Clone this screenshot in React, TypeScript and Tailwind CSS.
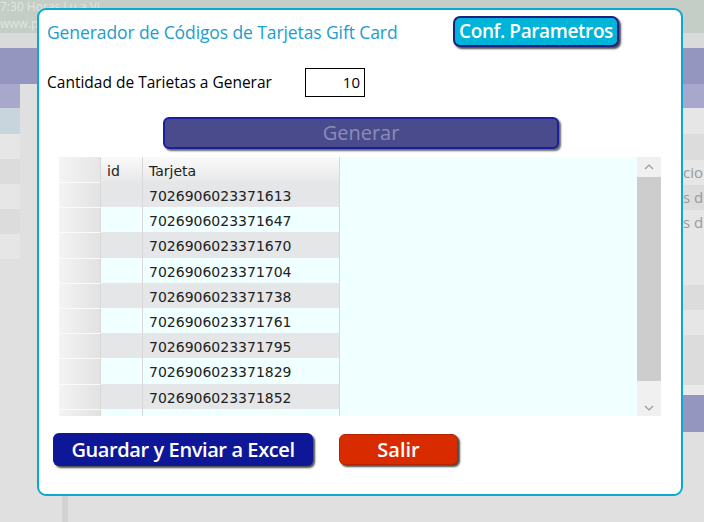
const cards = [
  "7026906023371613",
  "7026906023371647",
  "7026906023371670",
  "7026906023371704",
  "7026906023371738",
  "7026906023371761",
  "7026906023371795",
  "7026906023371829",
  "7026906023371852",
];

const sideRows = [
  "bg-[#e6e6e6]",
  "bg-[#dcdcdc]",
  "bg-[#e6e6e6]",
  "bg-[#dcdcdc]",
  "bg-[#e6e6e6]",
];

const App = () => {
  return (
    <div className="relative w-[704px] h-[522px] overflow-hidden bg-[#e0e0e0] font-['Open_Sans',sans-serif]">
      {/* app behind the dialog */}
      <div className="h-[33px] bg-[#c5cec6] text-[12px] leading-[11px] text-[#dfe6e0]">
        <div className="whitespace-nowrap pt-[1px]">7:30 Horas Lu a Vi</div>
        <div className="w-[36px] whitespace-nowrap pt-[6px]">www.pr</div>
      </div>
      <div className="h-[15px] bg-[#dadada]" />
      <div className="h-[36px] bg-[#9596c0]" />
      <div className="flex justify-between">
        <div className="w-[20px]">
          <div className="h-[24px] bg-[#a8a8cc]" />
          <div className="h-[26px] bg-[#c9d5dc]" />
          {sideRows.map((c, i) => (
            <div key={i} className={`h-[25px] ${c}`} />
          ))}
        </div>
        <div className="w-[21px] text-[15px] text-[#9a9a9a]">
          <div className="h-[24px] bg-[#a8a8cc]" />
          <div className="h-[26px] bg-[#e6e6e6]" />
          <div className="h-[26px] bg-[#dcdcdc]" />
          <div className="h-[25px] bg-[#e6e6e6] leading-[25px]">cio</div>
          <div className="h-[25px] bg-[#dcdcdc] leading-[25px]">s d</div>
          <div className="h-[25px] bg-[#e6e6e6] leading-[25px]">s d</div>
          <div className="h-[50px] bg-[#e6e6e6]" />
          <div className="h-[25px] bg-[#dcdcdc]" />
          <div className="h-[25px] bg-[#e6e6e6]" />
          <div className="h-[50px] bg-[#dcdcdc]" />
          <div className="h-[10px] bg-[#eaeaea]" />
          <div className="h-[37px] bg-[#9596c0]" />
        </div>
      </div>
      <div className="absolute left-[62px] top-[496px] w-[6px] h-[26px] bg-[#d2d2d2]" />

      {/* dialog */}
      <div className="absolute left-[37px] top-[8px] w-[646px] h-[488px] rounded-[9px] border-2 border-[#0aa9d3] bg-white">
        <div className="flex items-start pl-[8px] pt-[6px]">
          <h1 className="mt-[5px] w-[406px] whitespace-nowrap text-[17.5px] leading-[22px] text-[#1c9dcc] tracking-[-0.1px]">
            Generador de Códigos de Tarjetas Gift Card
          </h1>
          <button className="h-[31px] w-[166px] rounded-[7px] border-2 border-[#1d1f82] bg-[#00b3d9] text-[19px] font-semibold leading-none text-white shadow-[2px_2px_2px_rgba(0,0,0,0.7)] tracking-[-0.4px]">
            Conf. Parametros
          </button>
        </div>

        <div className="mt-[21px] flex items-center pl-[8px]">
          <span className="w-[258px] whitespace-nowrap text-[15.5px] text-black">
            Cantidad de Tarietas a Generar
          </span>
          <div className="h-[29px] w-[60px] border border-black px-[4px] text-right text-[15px] leading-[27px] text-black">
            10
          </div>
        </div>

        <div className="mt-[20px] flex pl-[124px]">
          <button className="h-[32px] w-[396px] rounded-[6px] border-2 border-[#1a1fa0] bg-[#4a4b8d] text-[20px] leading-none text-[#8b8cb6] shadow-[2px_2px_2px_rgba(0,0,0,0.6)]">
            Generar
          </button>
        </div>

        {/* grid */}
        <div className="ml-[20px] mt-[8px] flex h-[259px] w-[602px] bg-[#f0ffff] text-[14px] font-['DejaVu_Sans',sans-serif] text-[#222]">
          <div className="flex w-[578px] flex-col overflow-hidden">
            <div className="flex h-[25px] shrink-0">
              <div className="w-[42px] border-r border-[#d8d8d8] bg-gradient-to-r from-[#f4f4f4] to-[#e6e6e6]" />
              <div className="w-[42px] border-r border-[#d8d8d8] bg-gradient-to-b from-[#fafafa] to-[#e8e8e8] pl-[6px] pt-[2px] leading-[25px]">
                id
              </div>
              <div className="w-[197px] border-r border-[#d8d8d8] bg-gradient-to-b from-[#fafafa] to-[#e8e8e8] pl-[6px] pt-[2px] leading-[25px]">
                Tarjeta
              </div>
            </div>
            {[...cards, ""].map((c, i) => (
              <div key={i} className="flex h-[25.2px] shrink-0">
                <div className="w-[42px] border-r border-t border-[#fafafa] border-r-[#d8d8d8] bg-gradient-to-r from-[#f4f4f4] to-[#e2e2e2]" />
                <div
                  className={`w-[42px] border-r border-[#d8d8d8] ${i % 2 === 0 ? "bg-[#e4e6e7]" : "bg-[#f0ffff]"}`}
                />
                <div
                  className={`w-[197px] border-r border-[#d8d8d8] pl-[6px] pt-[2px] leading-[25px] ${i % 2 === 0 ? "bg-[#e4e6e7]" : "bg-[#f0ffff]"}`}
                >
                  {c}
                </div>
              </div>
            ))}
          </div>
          <div className="flex w-[24px] flex-col bg-[#f0f0f0]">
            <div className="flex h-[20px] items-center justify-center">
              <svg width="10" height="6" viewBox="0 0 10 6">
                <path d="M1 5 L5 1 L9 5" fill="none" stroke="#9a9a9a" strokeWidth="1.2" />
              </svg>
            </div>
            <div className="h-[204px] bg-[#cdcdcd]" />
            <div className="flex flex-1 items-end justify-center pb-[5px]">
              <svg width="10" height="6" viewBox="0 0 10 6">
                <path d="M1 1 L5 5 L9 1" fill="none" stroke="#9a9a9a" strokeWidth="1.2" />
              </svg>
            </div>
          </div>
        </div>

        <div className="mt-[17px] flex items-center pl-[14px]">
          <button className="h-[33px] w-[260px] rounded-[6px] bg-[#0f1799] text-[20px] font-semibold leading-none text-white shadow-[2px_2px_2px_rgba(0,0,0,0.7)] tracking-[-0.4px]">
            Guardar y Enviar a Excel
          </button>
          <button className="ml-[26px] h-[31px] w-[119px] rounded-[6px] border border-[#b52400] bg-[#d92b00] text-[20px] font-semibold leading-none text-white shadow-[2px_2px_2px_rgba(0,0,0,0.7)]">
            Salir
          </button>
        </div>
      </div>
    </div>
  );
};

export default App;
